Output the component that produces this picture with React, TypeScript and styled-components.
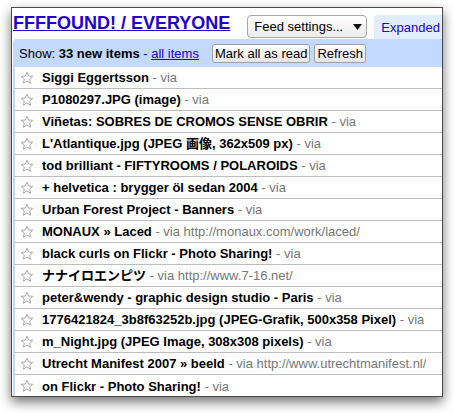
import styled, { createGlobalStyle } from "styled-components";

type Item = {
    title: string;
    via?: string;
};

const items: Item[] = [
    { title: "Siggi Eggertsson" },
    { title: "P1080297.JPG (image)" },
    { title: "Viñetas: SOBRES DE CROMOS SENSE OBRIR" },
    { title: "L'Atlantique.jpg (JPEG 画像, 362x509 px)" },
    { title: "tod brilliant - FIFTYROOMS / POLAROIDS" },
    { title: "+ helvetica : brygger öl sedan 2004" },
    { title: "Urban Forest Project - Banners" },
    { title: "MONAUX » Laced", via: "http://monaux.com/work/laced/" },
    { title: "black curls on Flickr - Photo Sharing!" },
    { title: "ナナイロエンピツ", via: "http://www.7-16.net/" },
    { title: "peter&wendy - graphic design studio - Paris" },
    { title: "1776421824_3b8f63252b.jpg (JPEG-Grafik, 500x358 Pixel)" },
    { title: "m_Night.jpg (JPEG Image, 308x308 pixels)" },
    { title: "Utrecht Manifest 2007 » beeld", via: "http://www.utrechtmanifest.nl/" },
    { title: "on Flickr - Photo Sharing!" },
];

const Star = () => (
    <StarIcon viewBox="0 0 14 14" aria-hidden>
        <path
            d="M7 1.2 L8.7 5 L12.8 5.3 L9.7 8 L10.6 12.2 L7 10 L3.4 12.2 L4.3 8 L1.2 5.3 L5.3 5 Z"
            fill="#fafafa"
            stroke="#a9a9a9"
            strokeWidth="1"
            strokeLinejoin="round"
        />
    </StarIcon>
);

const App = () => {
    return (
        <>
            <GlobalStyle />
            <Page>
                <Window>
                    <Header>
                        <Title href="#">FFFFOUND! / EVERYONE</Title>
                        <SettingsButton>
                            Feed settings...
                            <Caret viewBox="0 0 9 6" aria-hidden>
                                <path d="M0 0 H9 L4.5 6 Z" fill="#111" />
                            </Caret>
                        </SettingsButton>
                        <ViewTab>Expanded</ViewTab>
                    </Header>

                    <Toolbar>
                        <ShowText>
                            Show: <b>33 new items</b> - <ToolbarLink href="#">all items</ToolbarLink>
                        </ShowText>
                        <SmallButton>Mark all as read</SmallButton>
                        <SmallButton>Refresh</SmallButton>
                    </Toolbar>

                    <List>
                        {items.map((item, idx) => (
                            <Row key={idx}>
                                <Star />
                                <RowText>
                                    <EntryTitle>{item.title}</EntryTitle>
                                    <Via> - via{item.via ? ` ${item.via}` : ""}</Via>
                                </RowText>
                            </Row>
                        ))}
                    </List>
                </Window>
            </Page>
        </>
    );
};

export default App;

/* ================= styled ================= */

const GlobalStyle = createGlobalStyle`
    html, body {
        margin: 0;
        padding: 0;
        background: #ffffff;
    }
    body {
        font-family: "Liberation Sans", Arial, "Noto Sans CJK JP", sans-serif;
        font-size: 13px;
        color: #000;
    }
`;

const Page = styled.div`
    width: 454px;
    height: 413px;
    padding: 7px 0 0 11px;
    box-sizing: border-box;
`;

const Window = styled.div`
    width: 432px;
    height: 390px;
    box-sizing: border-box;
    border: 1px solid #4a4a4a;
    background: #ffffff;
    box-shadow: 0 5px 11px rgba(0, 0, 0, 0.55);
    overflow: hidden;
    display: flex;
    flex-direction: column;
`;

const Header = styled.div`
    display: flex;
    align-items: flex-end;
    height: 31px;
    padding-left: 1px;
    flex-shrink: 0;
`;

const Title = styled.a`
    font-size: 18px;
    font-weight: bold;
    color: #2200cc;
    text-decoration: underline;
    line-height: 22px;
    margin-bottom: 5px;
    white-space: nowrap;
`;

const SettingsButton = styled.div`
    display: flex;
    align-items: center;
    box-sizing: border-box;
    width: 120px;
    height: 23px;
    margin: 0 7px 1px 17px;
    padding: 0 0 0 6px;
    border: 1px solid #a8a8a8;
    border-radius: 4px;
    background: linear-gradient(#ffffff, #ececec);
    font-size: 13px;
    white-space: nowrap;
`;

const Caret = styled.svg`
    width: 9px;
    height: 6px;
    margin-left: 10px;
`;

const ViewTab = styled.div`
    flex: 1;
    height: 24px;
    box-sizing: border-box;
    padding: 5px 0 0 7px;
    background: #e0ecff;
    border-top-left-radius: 4px;
    color: #2200cc;
    font-size: 13px;
    white-space: nowrap;
`;

const Toolbar = styled.div`
    display: flex;
    align-items: center;
    height: 28px;
    margin-left: 1px;
    padding-left: 6px;
    background: #c3d9ff;
    border-top-left-radius: 4px;
    flex-shrink: 0;
`;

const ShowText = styled.span`
    font-size: 13px;
    white-space: nowrap;
    margin-right: 13px;
`;

const ToolbarLink = styled.a`
    color: #2200cc;
    text-decoration: underline;
`;

const SmallButton = styled.div`
    display: flex;
    align-items: center;
    height: 19px;
    box-sizing: border-box;
    padding: 0 2px;
    margin-right: 4px;
    border: 1px solid #a0a0a0;
    border-radius: 3px;
    background: linear-gradient(#ffffff, #e6e6e6);
    font-size: 13px;
    white-space: nowrap;
`;

const List = styled.div`
    flex: 1;
    margin-left: 1px;
    border-left: 2px solid #c3d9ff;
    overflow: hidden;
`;

const Row = styled.div`
    display: flex;
    align-items: center;
    height: 22px;
    box-sizing: border-box;
    border-bottom: 1px solid #bdbdbd;

    &:last-child {
        border-bottom: none;
    }
`;

const StarIcon = styled.svg`
    width: 14px;
    height: 14px;
    margin: 0 8px 0 5px;
    flex-shrink: 0;
`;

const RowText = styled.div`
    white-space: nowrap;
    overflow: hidden;
    font-size: 13px;
    line-height: 21px;
`;

const EntryTitle = styled.span`
    font-weight: bold;
    color: #000;
`;

const Via = styled.span`
    color: #777777;
`;
